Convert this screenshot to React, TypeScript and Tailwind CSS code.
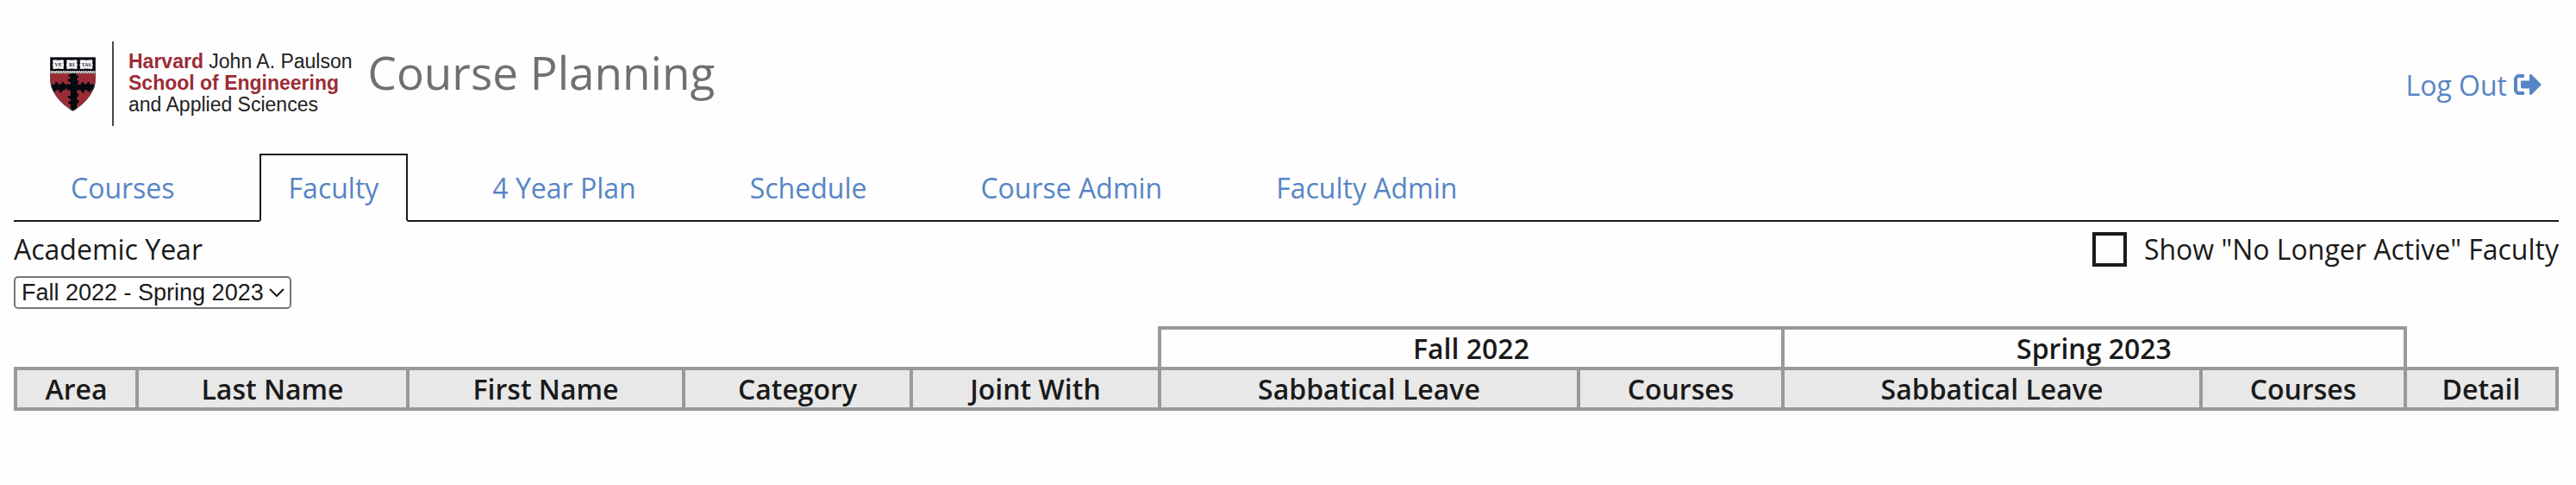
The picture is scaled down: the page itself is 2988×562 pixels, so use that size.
import { useState } from 'react';
import { FaSignOutAlt } from 'react-icons/fa';

const tabs = ['Courses', 'Faculty', '4 Year Plan', 'Schedule', 'Course Admin', 'Faculty Admin'];

const columns = [
  { label: 'Area', width: 141 },
  { label: 'Last Name', width: 314 },
  { label: 'First Name', width: 320 },
  { label: 'Category', width: 264 },
  { label: 'Joint With', width: 288 },
  { label: 'Sabbatical Leave', width: 486 },
  { label: 'Courses', width: 237 },
  { label: 'Sabbatical Leave', width: 485 },
  { label: 'Courses', width: 237 },
  { label: 'Detail', width: 176 },
];

const totalWidth = columns.reduce((sum, column) => sum + column.width, 0);

function Book({ x, width, text }: { x: number; width: number; text: string }) {
  return (
    <g>
      <path
        d={`M${x} 12 l5 -3 l${width / 2 - 5} 2 l${width / 2 - 5} -2 l5 3 l-2 8 l2 8 l-2 8 l2 4 l-5 2 l${5 - width / 2} -2 l${5 - width / 2} 2 l-5 -2 l2 -4 l-2 -8 l2 -8 z`}
        fill="#f4f4f4"
      />
      <text
        x={x + width / 2}
        y="33"
        textAnchor="middle"
        fontSize="18"
        fontWeight="700"
        fill="#333"
        className="font-['Liberation_Serif',serif]"
      >
        {text}
      </text>
    </g>
  );
}

function Shield() {
  return (
    <svg viewBox="0 0 160 189" className="h-[63px] w-[53px] shrink-0" aria-hidden="true">
      <defs>
        <clipPath id="shield">
          <path d="M0 0H160V74C160 118 128 160 80 189C32 160 0 118 0 74Z" />
        </clipPath>
      </defs>
      <g clipPath="url(#shield)">
        <rect width="160" height="189" fill="#9b2c36" />
        <rect width="160" height="48" fill="#050910" />
        <rect y="48" width="160" height="9" fill="#e6e6e6" />
        <path
          d="M-2 57l6-9M6 57l6-9M14 57l6-9M22 57l6-9M30 57l6-9M38 57l6-9M46 57l6-9M54 57l6-9M62 57l6-9M70 57l6-9M78 57l6-9M86 57l6-9M94 57l6-9M102 57l6-9M110 57l6-9M118 57l6-9M126 57l6-9M134 57l6-9M142 57l6-9M150 57l6-9M158 57l6-9"
          stroke="#333"
          strokeWidth="2.5"
        />
        <path
          d="M72 57H92V64H99V72L94 76V82H100V90L94 95H110V88H118V94H128L132 88H139V95H160V116H142V122H134L130 116H120V125H112L108 116H94V128H100V136L94 140V150H101V158L94 163V189H72V166L64 162V155H72V146L63 143V135H72V116H60V110H52V117H44L40 124H33V116H20V122H12V116H0V95H18V88H26L30 95H40V88H48L52 95H72V88L63 84V76H72V70L65 67V60H72Z"
          fill="#050910"
        />
      </g>
      <path d="M1 1H159V74C159 118 127 160 80 187C33 160 1 118 1 74Z" fill="none" stroke="#555b63" strokeWidth="2" />
      <Book x={9} width={40} text="VE" />
      <Book x={57} width={39} text="RI" />
      <Book x={104} width={46} text="TAS" />
    </svg>
  );
}

function Logo() {
  return (
    <a href="#home" className="flex h-[98px] items-center pl-[42px]">
      <Shield />
      <span className="ml-[19px] h-full w-[2px] bg-[#4a4a4a]" />
      <span className="ml-[17px] pb-[2px] font-['Liberation_Sans',sans-serif] text-[23px] leading-[25px] whitespace-nowrap text-[#222]">
        <span className="block">
          <b className="text-[#9b2c36]">Harvard</b> John A. Paulson
        </span>
        <b className="block text-[#9b2c36]">School of Engineering</b>
        <span className="block">and Applied Sciences</span>
      </span>
    </a>
  );
}

export default function App() {
  const [active, setActive] = useState('Faculty');
  const [showInactive, setShowInactive] = useState(false);

  return (
    <div className="min-h-screen bg-[#fefefe] pr-5 pl-4 font-['Open_Sans',sans-serif] text-[32px] leading-[43px] text-[#1a1a1a]">
      <header className="flex items-center pt-12 pb-8">
        <Logo />
        <h1 className="ml-[18px] self-start text-[53px] leading-[72px] whitespace-nowrap text-[#707070]">Course Planning</h1>
        <a href="#logout" className="mr-5 ml-auto flex items-center gap-2 pt-[2px] whitespace-nowrap text-[#5785c5]">
          Log Out
          <FaSignOutAlt className="size-8" />
        </a>
      </header>

      <nav className="flex gap-16 border-b-2 border-[#1a1a1a] pl-8">
        {tabs.map((tab) => (
          <a
            key={tab}
            href="#tab"
            onClick={() => setActive(tab)}
            className={
              tab === active
                ? '-mb-[2px] border-2 border-[#1a1a1a] border-b-[#fefefe] bg-[#fefefe] px-8 py-4 whitespace-nowrap text-[#5785c5]'
                : '-mb-[2px] border-2 border-transparent px-8 py-4 whitespace-nowrap text-[#5785c5]'
            }
          >
            {tab}
          </a>
        ))}
      </nav>

      <main>
        <div className="flex items-start justify-between pt-[10px]">
          <div className="flex flex-col items-start gap-[10px]">
            <label htmlFor="academic-year">Academic Year</label>
            <div className="relative">
              <select
                id="academic-year"
                className="block h-[38px] appearance-none rounded-[5px] border-2 border-[#767676] bg-white pr-[30px] pl-[7px] font-['Liberation_Sans',sans-serif] text-[27px] leading-[32px] text-[#1a1a1a]"
              >
                <option>Fall 2022 - Spring 2023</option>
              </select>
              <svg
                viewBox="0 0 18 10"
                className="pointer-events-none absolute top-[14px] right-2 h-[10px] w-[18px]"
                fill="none"
                stroke="#1a1a1a"
                strokeWidth="2"
                aria-hidden="true"
              >
                <path d="M1 1L9 9L17 1" />
              </svg>
            </div>
          </div>
          <label className="flex items-center gap-5 whitespace-nowrap">
            <input
              type="checkbox"
              checked={showInactive}
              onChange={(event) => setShowInactive(event.target.checked)}
              className="size-10 appearance-none border-4 border-[#1a1a1a] bg-[#fefefe] checked:bg-[#1a1a1a]"
            />
            Show "No Longer Active" Faculty
          </label>
        </div>

        <table className="mt-5 w-full table-fixed border-collapse">
          <colgroup>
            {columns.map((column, index) => (
              <col key={index} style={{ width: `${(column.width / totalWidth) * 100}%` }} />
            ))}
          </colgroup>
          <thead>
            <tr>
              <td colSpan={5} />
              <th scope="colgroup" colSpan={2} className="border-4 border-[#999] p-0 font-semibold">
                Fall 2022
              </th>
              <th scope="colgroup" colSpan={2} className="border-4 border-[#999] p-0 font-semibold">
                Spring 2023
              </th>
              <td />
            </tr>
            <tr>
              {columns.map((column, index) => (
                <th key={index} scope="col" className="border-4 border-[#999] bg-[#e8e8e8] p-0 font-semibold">
                  {column.label}
                </th>
              ))}
            </tr>
          </thead>
        </table>
      </main>
    </div>
  );
}
